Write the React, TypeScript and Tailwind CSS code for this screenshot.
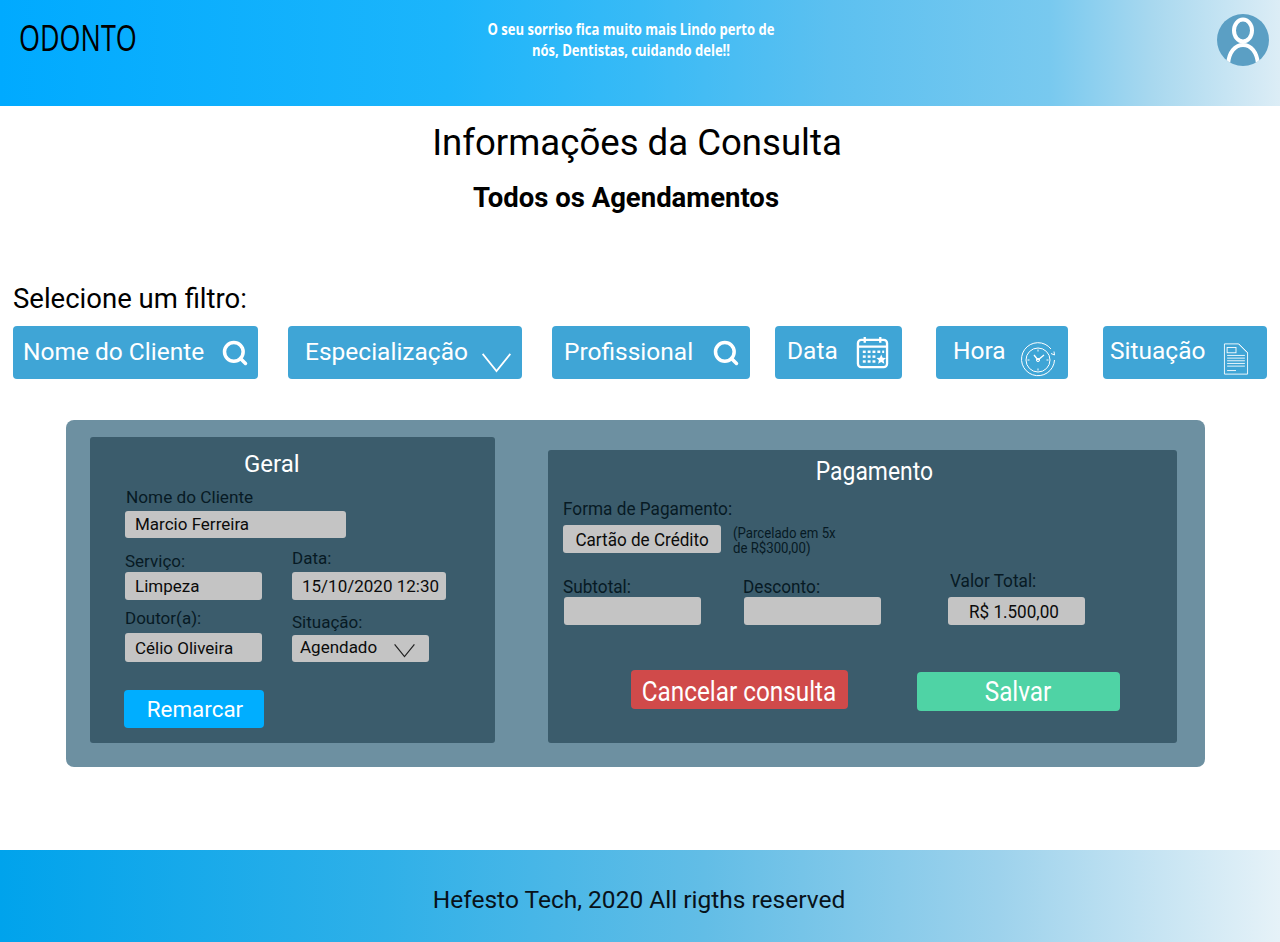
import { Search } from "lucide-react";

const roboto = "font-['Roboto','Liberation_Sans',sans-serif]";
const field = "h-[28px] flex items-center bg-[#c4c4c4] rounded-[3px] text-[17px] leading-none text-[#0b0b0b]";
const label = "block text-[17px] leading-[20px] text-[#071a24]";
const condLabel = "block origin-left scale-x-[0.93] text-[18.5px] leading-[20px] text-[#071a24] whitespace-nowrap";

function Chevron({ className }: { className: string }) {
  return (
    <svg className={className} viewBox="0 0 32 22" fill="none" stroke="currentColor" strokeWidth="1.8">
      <path d="M1.5 2 L16 20 L30.5 2" />
    </svg>
  );
}

function CalendarIcon() {
  return (
    <svg width="33" height="33" viewBox="0 0 34 34" fill="none" stroke="white" strokeWidth="2.4">
      <rect x="2" y="4" width="30" height="28" rx="3.5" />
      <path d="M2 11 H32 M9 1 V7 M25 1 V7" />
      <g fill="white" stroke="none">
        <rect x="7" y="15" width="3" height="2.5" />
        <rect x="12" y="15" width="3" height="2.5" />
        <rect x="17" y="15" width="3" height="2.5" />
        <rect x="22" y="15" width="3" height="2.5" />
        <rect x="27" y="15" width="2" height="2.5" />
        <rect x="7" y="20" width="3" height="2.5" />
        <rect x="12" y="20" width="3" height="2.5" />
        <rect x="17" y="20" width="3" height="2.5" />
        <rect x="7" y="25" width="3" height="2.5" />
        <rect x="12" y="25" width="3" height="2.5" />
        <rect x="17" y="25" width="3" height="2.5" />
        <path d="M26 19 L27.5 22.3 L31 22.7 L28.4 25 L29.2 28.5 L26 26.7 L22.8 28.5 L23.6 25 L21 22.7 L24.5 22.3 Z" />
      </g>
    </svg>
  );
}

function ClockIcon() {
  return (
    <svg width="36" height="36" viewBox="0 0 36 36" fill="none" stroke="white" strokeWidth="1">
      <path d="M31 7 A16.5 16.5 0 1 0 34.5 18" />
      <path d="M34 9.5 L34.5 13 L31 11.5" />
      <circle cx="18" cy="18" r="12" />
      <path d="M18 18 L14 13 M18 18 L24 13" strokeWidth="1.3" />
      <circle cx="18" cy="18" r="1.6" />
      <path d="M18 7.5 V9.5 M18 26.5 V28.5 M7.5 18 H9.5 M26.5 18 H28.5" />
    </svg>
  );
}

function DocIcon() {
  return (
    <svg width="26" height="32" viewBox="0 0 28 36" fill="none" stroke="white" strokeWidth="1">
      <path d="M1 1 H17 L27 11 V35 H1 Z" />
      <path d="M17 1 L27 11" />
      <rect x="4" y="5" width="10" height="6" />
      <path d="M4 14 H24 M4 17 H24 M4 20 H24 M4 23 H24 M4 26 H24 M4 31 H14" />
    </svg>
  );
}

const filters = [
  { text: "Nome do Cliente", width: "w-[245px]", left: "", pad: "pl-[10px] pr-[9px]", lift: "", icon: <Search size={28} strokeWidth={3} color="white" /> },
  { text: "Especialização", width: "w-[234px]", left: "ml-[30px]", pad: "pl-[17px] pr-[10px]", lift: "", icon: <Chevron className="w-[31px] h-[21px] mt-[20px] text-white" /> },
  { text: "Profissional", width: "w-[198px]", left: "ml-[30px]", pad: "pl-[12px] pr-[10px]", lift: "", icon: <Search size={28} strokeWidth={3} color="white" /> },
  { text: "Data", width: "w-[127px]", left: "ml-[25px]", pad: "pl-[12px] pr-[13px]", lift: "-mt-[2px]", icon: <CalendarIcon /> },
  { text: "Hora", width: "w-[132px]", left: "ml-[34px]", pad: "pl-[17px] pr-[12px]", lift: "-mt-[2px]", icon: <span className="mt-[15px]"><ClockIcon /></span> },
  { text: "Situação", width: "w-[164px]", left: "ml-[35px]", pad: "pl-[7px] pr-[18px]", lift: "-mt-[2px]", icon: <span className="mt-[13px]"><DocIcon /></span> },
];

export default function App() {
  return (
    <div className={`w-[1280px] h-[942px] flex flex-col bg-white overflow-hidden ${roboto}`}>
      {/* Header */}
      <header className="h-[106px] shrink-0 flex items-start bg-[linear-gradient(90deg,#00aaff_0%,#1cb5fb_35%,#38baf6_50%,#5cc0f0_65%,#78c9ef_82%,#a8d8ef_90%,#dcedf6_100%)]">
        <div className="w-[300px] pl-[19px] pt-[16px] text-[36px] leading-[44px] text-black font-['Open_Sans',sans-serif]">
          <span className="inline-block origin-left scale-x-[0.75] whitespace-nowrap">ODONTO</span>
        </div>
        <div className="w-[662px] pt-[19px] text-center text-[16px] leading-[21px] font-bold text-white font-['Open_Sans',sans-serif]">
          <p className="scale-x-[0.815]">O seu sorriso fica muito mais Lindo perto de</p>
          <p className="scale-x-[0.815]">nós, Dentistas, cuidando dele!!</p>
        </div>
        <div className="ml-[255px] mt-[14px] w-[52px] h-[52px] rounded-full overflow-hidden bg-[#5b9fc4]">
          <svg width="52" height="52" viewBox="0 0 52 52" fill="none" stroke="white" strokeWidth="4">
            <ellipse cx="26" cy="16.5" rx="9" ry="11" />
            <path d="M11 50 C12 38 18 31 26 31 C34 31 40 38 41 50" />
          </svg>
        </div>
      </header>

      {/* Titles */}
      <h1 className="mt-[15px] text-center text-[36.6px] leading-[44px] text-black -translate-x-[3px]">Informações da Consulta</h1>
      <h2 className="mt-[17px] text-center text-[27.5px] leading-[32px] font-bold text-black -translate-x-[14px]">Todos os Agendamentos</h2>

      {/* Filters */}
      <p className="mt-[69px] pl-[13px] text-[27.5px] leading-[32px] text-black">Selecione um filtro:</p>
      <div className="mt-[11px] pl-[13px] flex">
        {filters.map((f) => (
          <div
            key={f.text}
            className={`h-[53px] flex items-center justify-between bg-[#3fa5d6] rounded-[4px] overflow-hidden text-white text-[24.5px] leading-none ${f.width} ${f.left} ${f.pad}`}
          >
            <span className={`whitespace-nowrap ${f.lift}`}>{f.text}</span>
            {f.icon}
          </div>
        ))}
      </div>

      {/* Details card */}
      <section className="mt-[41px] ml-[66px] w-[1139px] h-[347px] bg-[#6d90a1] rounded-[8px] flex items-start text-[#071a24]">
        {/* Geral */}
        <div className="mt-[17px] ml-[24px] w-[405px] h-[306px] bg-[#3b5c6c] rounded-[3px] pl-[35px]">
          <h3 className="mt-[12px] pl-[119px] text-[24px] leading-[30px] text-white">Geral</h3>
          <span className="mt-[8px] pl-[1px] block text-[17.2px] leading-[20px]">Nome do Cliente</span>
          <div className={`mt-[4px] w-[221px] pl-[10px] !h-[27px] ${field}`}>Marcio Ferreira</div>
          <div className="mt-[10px] flex">
            <div className="w-[167px]">
              <span className={`${label} mt-[3px]`}>Serviço:</span>
              <div className={`mt-[1px] w-[137px] pl-[10px] ${field}`}>Limpeza</div>
            </div>
            <div>
              <span className={label}>Data:</span>
              <div className={`mt-[4px] w-[154px] pl-[10px] ${field}`}>15/10/2020 12:30</div>
            </div>
          </div>
          <div className="mt-[8px] flex">
            <div className="w-[167px]">
              <span className={label}>Doutor(a):</span>
              <div className={`mt-[5px] w-[137px] pl-[10px] pt-[2px] !h-[29px] ${field}`}>Célio Oliveira</div>
            </div>
            <div>
              <span className={`${label} mt-[4px]`}>Situação:</span>
              <div className={`mt-[3px] w-[137px] pl-[8px] pr-[13px] !h-[27px] justify-between ${field}`}>
                <span className="-mt-[2px]">Agendado</span>
                <Chevron className="w-[23px] h-[15px] mt-[3px] text-[#222]" />
              </div>
            </div>
          </div>
          <button className="mt-[28px] -ml-[1px] pl-[2px] w-[140px] h-[38px] bg-[#00aeff] rounded-[4px] text-[22.4px] leading-none text-white">Remarcar</button>
        </div>

        {/* Pagamento */}
        <div className="mt-[30px] ml-[53px] w-[629px] h-[293px] bg-[#3b5c6c] rounded-[3px] pl-[15px]">
          <h3 className="mt-[7px] pl-[10px] text-center text-[26px] leading-[28px] text-white scale-x-[0.88]">Pagamento</h3>
          <span className={`mt-[14px] ${condLabel}`}>Forma de Pagamento:</span>
          <div className="mt-[6px] flex">
            <div className={`w-[158px] justify-center ${field}`}>
              <span className="scale-x-[0.9] text-[19px] whitespace-nowrap">Cartão de Crédito</span>
            </div>
            <p className="mt-[1px] ml-[12px] origin-left scale-x-[0.91] text-[14.5px] leading-[15px] text-[#071a24] whitespace-nowrap">
              (Parcelado em 5x
              <br />
              de R$300,00)
            </p>
          </div>
          <div className="mt-[15px] flex items-end">
            <div className="w-[180px]">
              <span className={condLabel}>Subtotal:</span>
              <div className={`ml-[1px] w-[137px] ${field}`} />
            </div>
            <div className="w-[205px]">
              <span className={condLabel}>Desconto:</span>
              <div className={`ml-[1px] w-[137px] ${field}`} />
            </div>
            <div>
              <span className={`${condLabel} ml-[2px]`}>Valor Total:</span>
              <div className={`mt-[6px] w-[137px] pr-[6px] justify-center ${field}`}>
                <span className="scale-x-[0.9] text-[19px] whitespace-nowrap">R$ 1.500,00</span>
              </div>
            </div>
          </div>
          <div className="mt-[45px] flex items-start">
            <button className="ml-[68px] pt-[5px] w-[217px] h-[39px] flex items-center justify-center bg-[#d04a4a] rounded-[4px] text-white">
              <span className="scale-x-[0.9] text-[27px] leading-none whitespace-nowrap">Cancelar consulta</span>
            </button>
            <button className="mt-[2px] ml-[69px] pt-[2px] pr-[2px] w-[203px] h-[39px] flex items-center justify-center bg-[#4fd3a5] rounded-[4px] text-white">
              <span className="scale-x-[0.9] text-[27px] leading-none whitespace-nowrap">Salvar</span>
            </button>
          </div>
        </div>
      </section>

      {/* Footer */}
      <footer className="mt-auto h-[92px] shrink-0 flex items-center justify-center pt-[8px] bg-[linear-gradient(90deg,#00a3ec_0%,#2fb0e8_30%,#62bde6_55%,#9dd2ec_78%,#e6f2f8_100%)] text-[24.5px] text-[#08121a]">
        <span className="-translate-x-[1px]">Hefesto Tech, 2020 All rigths reserved</span>
      </footer>
    </div>
  );
}
